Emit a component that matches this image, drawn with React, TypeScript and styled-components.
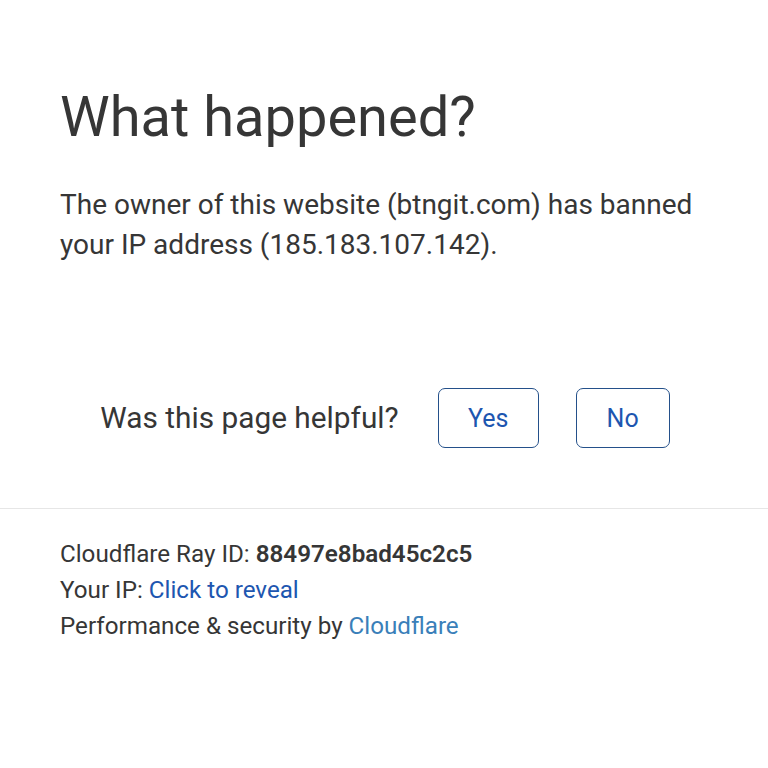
import styled, { createGlobalStyle } from 'styled-components';

const GlobalStyle = createGlobalStyle`
  html, body {
    margin: 0;
    padding: 0;
    background: #ffffff;
  }
  body {
    font-family: Roboto, "Liberation Sans", sans-serif;
    color: #363636;
  }
`;

const Page = styled.div`
  width: 768px;
  height: 768px;
  overflow: hidden;
  display: flex;
  flex-direction: column;
`;

const Main = styled.main`
  padding: 85px 60px 0 60px;
`;

const Title = styled.h1`
  margin: 0;
  font-size: 56px;
  font-weight: 400;
  line-height: 64px;
  color: #363636;
`;

const Lead = styled.p`
  margin: 36px 0 0 0;
  font-size: 28px;
  line-height: 40px;
  color: #363636;
`;

const Feedback = styled.div`
  display: flex;
  align-items: center;
  justify-content: center;
  margin-top: 123px;
  padding-left: 2px;
`;

const Question = styled.span`
  font-size: 29.8px;
  color: #363636;
  margin-right: 39px;
  position: relative;
  top: -1px;
`;

const FeedbackButton = styled.button<{ $w: number }>`
  width: ${p => p.$w}px;
  height: 60px;
  margin-right: 37px;
  background: #ffffff;
  border: 1.5px solid #24508a;
  border-radius: 7px;
  color: #1d56b0;
  font-family: Roboto, "Liberation Sans", sans-serif;
  font-size: 25px;
  cursor: pointer;
  &:last-child {
    margin-right: 0;
  }
`;

const Divider = styled.hr`
  margin: 60px 0 0 0;
  border: 0;
  border-top: 1px solid #e6e6e6;
`;

const Footer = styled.footer`
  padding: 27px 60px 0 60px;
  font-size: 24.2px;
  line-height: 36px;
  color: #363636;
`;

const Line = styled.div``;

const Strong = styled.span`
  font-weight: 600;
`;

const Link = styled.a<{ $light?: boolean }>`
  color: ${p => (p.$light ? '#3a7fb9' : '#1d56b0')};
  text-decoration: none;
  cursor: pointer;
`;

export default function App() {
  return (
    <>
      <GlobalStyle />
      <Page>
        <Main>
          <Title>What happened?</Title>
          <Lead>
            The owner of this website (btngit.com) has banned your IP address (185.183.107.142).
          </Lead>
          <Feedback>
            <Question>Was this page helpful?</Question>
            <FeedbackButton $w={101}>Yes</FeedbackButton>
            <FeedbackButton $w={94}>No</FeedbackButton>
          </Feedback>
        </Main>
        <Divider />
        <Footer>
          <Line>
            Cloudflare Ray ID: <Strong>88497e8bad45c2c5</Strong>
          </Line>
          <Line>
            Your IP: <Link>Click to reveal</Link>
          </Line>
          <Line>
            Performance &amp; security by <Link $light>Cloudflare</Link>
          </Line>
        </Footer>
      </Page>
    </>
  );
}
